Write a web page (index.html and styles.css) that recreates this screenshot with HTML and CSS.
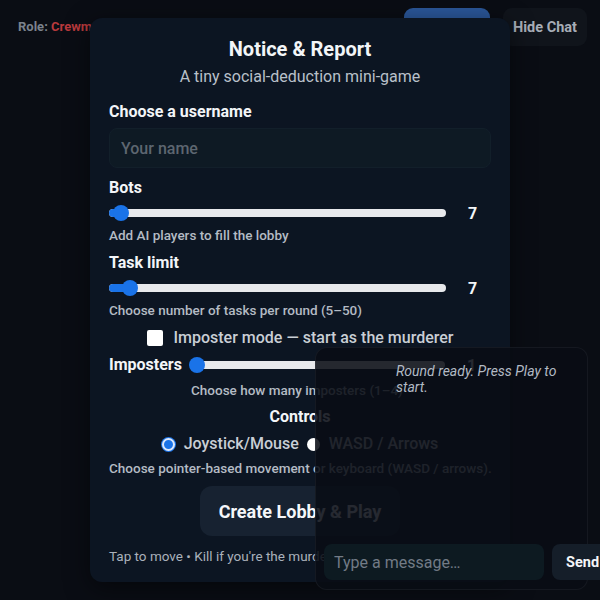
FILE: index.html
```html
<!DOCTYPE html>
<html lang="en">
<head>
<meta charset="utf-8">
<title>Notice &amp; Report</title>
<link rel="stylesheet" href="styles.css">
</head>
<body>
<header class="topbar">
  <div class="role">Role: <span class="role-name">Crewmate</span></div>
  <div class="top-actions">
    <button class="btn-primary">Play</button>
    <button class="btn-ghost">Hide Chat</button>
  </div>
</header>

<section class="modal">
  <h1 class="title">Notice &amp; Report</h1>
  <p class="subtitle">A tiny social-deduction mini-game</p>

  <label class="field-label" for="name">Choose a username</label>
  <input id="name" class="text-input" type="text" placeholder="Your name">

  <div class="field-label">Bots</div>
  <div class="slider-row">
    <div class="range"><div class="range-fill" style="width:12px"></div><div class="range-thumb" style="left:12px"></div></div>
    <span class="range-value">7</span>
  </div>
  <p class="hint">Add AI players to fill the lobby</p>

  <div class="field-label">Task limit</div>
  <div class="slider-row">
    <div class="range"><div class="range-fill" style="width:21px"></div><div class="range-thumb" style="left:21px"></div></div>
    <span class="range-value">7</span>
  </div>
  <p class="hint">Choose number of tasks per round (5–50)</p>

  <label class="check-row"><span class="checkbox"></span>Imposter mode — start as the murderer</label>

  <div class="slider-row inline">
    <span class="field-label inline-label">Imposters</span>
    <div class="range"><div class="range-fill" style="width:7px"></div><div class="range-thumb" style="left:7px"></div></div>
    <span class="range-value">1</span>
  </div>
  <p class="hint indent">Choose how many imposters (1–4)</p>

  <div class="field-label center">Controls</div>
  <div class="radio-row">
    <label class="radio-opt"><span class="radio checked"></span>Joystick/Mouse</label>
    <label class="radio-opt"><span class="radio"></span>WASD / Arrows</label>
  </div>
  <p class="hint nowrap">Choose pointer-based movement or keyboard (WASD / arrows).</p>

  <div class="cta-wrap"><button class="btn-cta">Create Lobby &amp; Play</button></div>

  <p class="footnote">Tap to move • Kill if you're the murderer • Report bodies</p>
</section>

<aside class="chat">
  <div class="chat-log">
    <p class="chat-msg">Round ready. Press Play to start.</p>
  </div>
  <div class="chat-form">
    <input class="chat-input" type="text" placeholder="Type a message…">
    <button class="chat-send">Send</button>
  </div>
</aside>
</body>
</html>
```
FILE: styles.css
```css
* { box-sizing: border-box; }

html, body {
  margin: 0;
  height: 100%;
}

body {
  background: #0a0d14;
  font-family: Roboto, "Noto Sans", Arial, sans-serif;
  color: #eef1f5;
  overflow: hidden;
  position: relative;
}

/* top bar */
.topbar {
  display: flex;
  justify-content: space-between;
  align-items: flex-start;
  padding: 8px 13px 0 18px;
}

.role {
  margin-top: 11px;
  font-size: 13px;
  font-weight: 700;
  color: #7b828d;
}

.role-name { color: #b8393c; }

.top-actions {
  display: flex;
  gap: 13px;
}

.top-actions button {
  font-family: inherit;
  border: 0;
  height: 38px;
  border-radius: 9px;
  font-size: 14.5px;
  font-weight: 700;
}

.btn-primary {
  width: 86px;
  background: #2a5698;
  color: #fff;
}

.btn-ghost {
  width: 84px;
  background: #10141b;
  color: #a7adb7;
}

/* lobby modal */
.modal {
  position: absolute;
  left: 90px;
  top: 18px;
  width: 420px;
  height: 564px;
  background: #0c1522;
  border-radius: 12px;
  box-shadow: 0 6px 24px rgba(0, 0, 0, 0.5);
  padding: 19px 19px 0 19px;
}

.title {
  margin: 0;
  text-align: center;
  font-size: 20px;
  font-weight: 700;
  line-height: 24px;
  color: #f3f5f8;
}

.subtitle {
  margin: 5px 0 0;
  text-align: center;
  font-size: 16px;
  line-height: 22px;
  color: #b9c0ca;
}

.field-label {
  display: block;
  font-size: 16px;
  font-weight: 700;
  line-height: 20px;
  color: #f3f5f8;
}

.modal > .subtitle + .field-label { margin-top: 14px; }
.modal > .text-input + .field-label { margin-top: 10px; }
.modal > .hint + .field-label { margin-top: 9px; }

.text-input {
  display: block;
  width: 382px;
  height: 40px;
  margin-top: 6px;
  background: #0e1a24;
  border: 1px solid #121f2a;
  border-radius: 8px;
  padding: 0 11px;
  font-family: inherit;
  font-size: 16px;
  font-weight: 500;
  color: #fff;
}

.text-input::placeholder { color: #5d6670; }

.slider-row {
  display: flex;
  align-items: center;
  height: 20px;
  margin-top: 5px;
}

.range {
  position: relative;
  width: 337px;
  height: 8px;
  background: #e8e9ec;
  border-radius: 4px;
}

.range-fill {
  position: absolute;
  left: 0;
  top: 0;
  bottom: 0;
  background: #1a73e8;
  border-radius: 4px 0 0 4px;
}

.range-thumb {
  position: absolute;
  top: 50%;
  width: 16px;
  height: 16px;
  margin: -8px 0 0 -8px;
  background: #1a73e8;
  border-radius: 50%;
}

.range-value {
  margin-left: 22px;
  font-size: 16px;
  font-weight: 700;
  color: #f3f5f8;
}

.hint {
  margin: 3px 0 0;
  font-size: 13.5px;
  line-height: 18px;
  font-weight: 500;
  color: #b4bbc4;
}

.hint.nowrap { white-space: nowrap; }

.hint.indent { margin-left: 82px; }

.center { text-align: center; }

.check-row {
  display: flex;
  align-items: center;
  justify-content: center;
  gap: 11px;
  margin-top: 9px;
  font-size: 16px;
  font-weight: 500;
  line-height: 20px;
  color: #c9ced5;
}

.checkbox {
  width: 16px;
  height: 16px;
  background: #fff;
  border-radius: 2px;
}

.slider-row.inline { margin-top: 7px; }

.inline-label { margin-right: 8px; }

.slider-row.inline .range { width: 255px; }

.slider-row.inline + .hint { margin-top: 6px; }

.modal > .hint + .field-label.center { margin-top: 8px; }

.radio-row {
  display: flex;
  justify-content: center;
  gap: 8px;
  margin-top: 7px;
}

.radio-opt {
  display: flex;
  align-items: center;
  gap: 9px;
  font-size: 16px;
  font-weight: 500;
  line-height: 20px;
  color: #c9ced5;
}

.radio {
  width: 13px;
  height: 13px;
  border-radius: 50%;
  background: #fff;
}

.radio.checked {
  background: #1a73e8;
  border: 2px solid #dce8fb;
  box-shadow: 0 0 0 1px #1a73e8;
}

.radio-row + .hint { margin-top: 5px; }

.cta-wrap {
  display: flex;
  justify-content: center;
  margin-top: 9px;
}

.btn-cta {
  width: 200px;
  height: 50px;
  border: 0;
  border-radius: 12px;
  background: #172231;
  color: #f5f7fa;
  font-family: inherit;
  font-size: 18px;
  font-weight: 700;
}

.footnote {
  margin: 11px 0 0;
  font-size: 13.5px;
  line-height: 18px;
  color: #aab1bb;
  white-space: nowrap;
}

/* chat panel, floating over the lobby */
.chat {
  position: absolute;
  left: 315px;
  top: 347px;
  width: 273px;
  height: 243px;
  background: rgba(9, 13, 21, 0.88);
  border: 1px solid rgba(255, 255, 255, 0.05);
  border-radius: 12px;
  padding: 8px;
  display: flex;
  flex-direction: column;
}

.chat-log {
  flex: 1;
  padding: 7px 0 0 72px;
}

.chat-msg {
  margin: 0;
  width: 165px;
  font-size: 14px;
  line-height: 16px;
  font-style: italic;
  color: #b2bac4;
}

.chat-form {
  display: flex;
  gap: 8px;
  width: 300px;
  margin-bottom: 1px;
}

.chat-input {
  width: 220px;
  height: 36px;
  border: 0;
  border-radius: 8px;
  background: #0d1a21;
  padding: 0 10px;
  font-family: inherit;
  font-size: 16px;
  color: #fff;
}

.chat-input::placeholder { color: #727b86; }

.chat-send {
  width: 64px;
  height: 36px;
  border: 0;
  border-radius: 8px;
  background: #151e29;
  color: #f4f6f9;
  font-family: inherit;
  font-size: 14.5px;
  font-weight: 700;
  text-align: left;
  padding: 0 0 0 14px;
}
```
